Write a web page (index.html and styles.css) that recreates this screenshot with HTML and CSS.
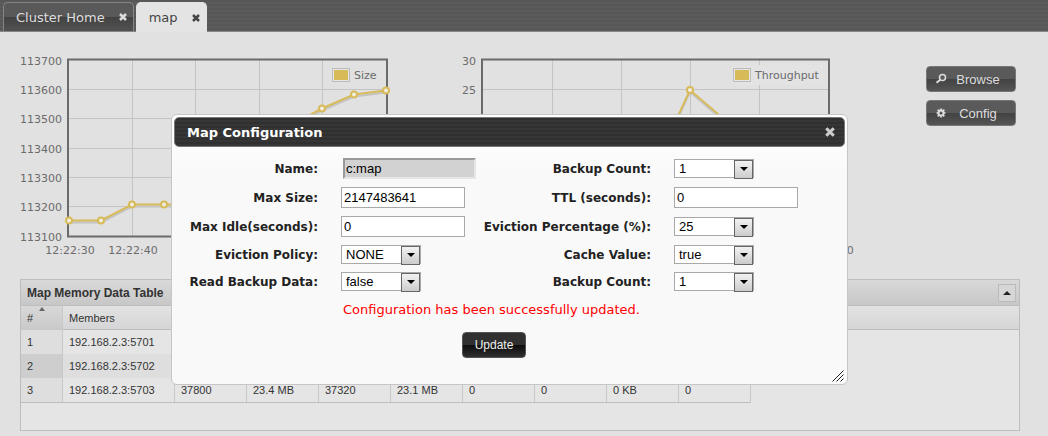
FILE: index.html
```html
<!DOCTYPE html>
<html lang="en">
<head>
<meta charset="utf-8">
<title>Cluster map</title>
<link rel="stylesheet" href="styles.css">
</head>
<body>
<svg width="0" height="0" class="defs" aria-hidden="true">
  <symbol id="close" viewBox="0 0 8 8"><path d="M1 1 7 7M7 1 1 7" fill="none" stroke="currentColor" stroke-width="2.5"/></symbol>
</svg>
<nav class="tabs">
  <div class="tab"><a href="#home">Cluster Home</a><button class="close" aria-label="Close Cluster Home"><svg width="8" height="8"><use href="#close"/></svg></button></div>
  <div class="tab tab-active"><a href="#map">map</a><button class="close" aria-label="Close map"><svg width="8" height="8"><use href="#close"/></svg></button></div>
</nav>
<main>
  <section class="overview">
    <svg class="chart" width="400" height="212" viewBox="14 50 400 212">
      <path class="grid" d="M132.5 60V236M195.5 60V236M259.5 60V236M322.5 60V236M69 89.500H386M69 118.500H386M69 148.500H386M69 177.500H386M69 206.500H386"/>
      <rect class="frame" x="68" y="59.500" width="319" height="177"/>
      <g class="ticks" text-anchor="end">
        <text x="62" y="65">113700</text><text x="62" y="94">113600</text><text x="62" y="123">113500</text>
        <text x="62" y="153">113400</text><text x="62" y="182">113300</text><text x="62" y="211">113200</text><text x="62" y="241">113100</text>
      </g>
      <g class="ticks" text-anchor="middle"><text x="70" y="254">12:22:30</text><text x="133" y="254">12:22:40</text></g>
      <path class="shade" d="M69 222.500H101L132 206.500H164L196 206.500L227 176L259 154L291 128L322 110.500L354 96.500L386 92.500"/>
      <path class="line" d="M69 220.500H101L132 204.500H164L196 204.500L227 174L259 152L291 125L322 108.500L354 94.500L386 90.500"/>
      <g class="dots"><circle cx="69" cy="220.500" r="3"/><circle cx="101" cy="220.500" r="3"/><circle cx="132" cy="204.500" r="3"/><circle cx="164" cy="204.500" r="3"/><circle cx="322" cy="108.500" r="3"/><circle cx="354" cy="94.500" r="3"/><circle cx="386" cy="90.500" r="3"/></g>
      <rect class="swatch-box" x="332.500" y="68.500" width="17" height="13"/><rect class="swatch" x="334" y="70" width="14" height="10"/>
      <text class="ticks" x="354" y="79">Size</text>
    </svg>
    <svg class="chart" width="410" height="212" viewBox="450 50 410 212">
      <path class="grid" d="M552.500 60V236M621.500 60V236M690.500 60V236M759.500 60V236M483 89.500H828M483 118.500H828M483 148.500H828M483 177.500H828M483 206.500H828"/>
      <rect class="frame" x="482" y="59.500" width="347" height="177"/>
      <g class="ticks" text-anchor="end"><text x="476" y="65">30</text><text x="476" y="94">25</text></g>
      <text class="ticks" x="829" y="254" text-anchor="middle">12:23:20</text>
      <path class="shade" d="M655 168L690 92L725 122"/>
      <path class="line" d="M655 166L690 90L725 120"/>
      <g class="dots"><circle cx="690" cy="90" r="3"/></g>
      <rect class="legend-back" x="732" y="65" width="91" height="20"/>
      <rect class="swatch-box" x="733.500" y="68.500" width="17" height="13"/><rect class="swatch" x="735" y="70" width="14" height="10"/>
      <text class="ticks" x="755" y="79">Throughput</text>
    </svg>
    <div class="actions">
      <button class="action"><svg width="12" height="12" viewBox="0 0 12 12"><circle cx="7.500" cy="4.500" r="3" fill="none" stroke="currentColor" stroke-width="1.500"/><path d="M5.300 6.700 1.500 9.800" stroke="currentColor" stroke-width="2"/></svg><span>Browse</span></button>
      <button class="action"><svg width="12" height="12" viewBox="0 0 12 12"><circle cx="6" cy="6" r="2.500" fill="none" stroke="currentColor" stroke-width="2"/><path d="M6 1.500V3M6 9V10.500M1.500 6H3M9 6H10.500M2.700 2.700 3.800 3.800M8.200 8.200 9.300 9.300M9.300 2.700 8.200 3.800M3.800 8.200 2.700 9.300" stroke="currentColor" stroke-width="1.700"/></svg><span>Config</span></button>
    </div>
  </section>
  <section class="panel">
    <header class="panel-head"><h2>Map Memory Data Table</h2><button class="collapse" aria-label="Collapse"><svg width="8" height="4" viewBox="0 0 8 4"><path d="M0 4 4 0 8 4Z" fill="currentColor"/></svg></button></header>
    <div class="table-area">
      <table>
        <thead><tr><th class="sorted">#<svg class="sort" width="6" height="4" viewBox="0 0 6 4"><path d="M0 4 3 0 6 4Z" fill="currentColor"/></svg></th><th class="members">Members</th><th></th><th></th><th></th><th></th><th></th><th></th><th></th><th></th></tr></thead>
        <tbody>
          <tr><td>1</td><td>192.168.2.3:5701</td><td></td><td></td><td></td><td></td><td></td><td></td><td></td><td></td></tr>
          <tr><td>2</td><td>192.168.2.3:5702</td><td></td><td></td><td></td><td></td><td></td><td></td><td></td><td></td></tr>
          <tr><td>3</td><td>192.168.2.3:5703</td><td>37800</td><td>23.4 MB</td><td>37320</td><td>23.1 MB</td><td>0</td><td>0</td><td>0 KB</td><td>0</td></tr>
        </tbody>
      </table>
    </div>
  </section>
</main>
<section class="dialog" role="dialog" aria-labelledby="dialog-title">
  <header class="dialog-head"><h1 id="dialog-title">Map Configuration</h1><button class="close" aria-label="Close dialog"><svg width="10" height="10"><use href="#close"/></svg></button></header>
  <form>
    <div class="fields">
      <label for="name">Name:</label><div class="control"><input class="text locked" id="name" value="c:map" readonly></div>
      <label for="backup">Backup Count:</label><div class="control"><span class="pick"><select id="backup"><option>1</option></select></span></div>
      <label for="max">Max Size:</label><div class="control"><input class="text" id="max" value="2147483641"></div>
      <label for="ttl">TTL (seconds):</label><div class="control"><input class="text" id="ttl" value="0"></div>
      <label for="idle">Max Idle(seconds):</label><div class="control"><input class="text" id="idle" value="0"></div>
      <label for="percent">Eviction Percentage (%):</label><div class="control"><span class="pick"><select id="percent"><option>25</option></select></span></div>
      <label for="policy">Eviction Policy:</label><div class="control"><span class="pick"><select id="policy"><option>NONE</option></select></span></div>
      <label for="cache">Cache Value:</label><div class="control"><span class="pick"><select id="cache"><option>true</option></select></span></div>
      <label for="read">Read Backup Data:</label><div class="control"><span class="pick"><select id="read"><option>false</option></select></span></div>
      <label for="backup2">Backup Count:</label><div class="control"><span class="pick"><select id="backup2"><option>1</option></select></span></div>
    </div>
    <p class="message">Configuration has been successfully updated.</p>
    <button class="update" type="button">Update</button>
  </form>
  <svg class="grip" width="12" height="12" viewBox="0 0 12 12"><path d="M0.500 11.500 11.500 0.500M4.500 11.500 11.500 4.500M8.500 11.500 11.500 8.500" stroke="#222" fill="none"/></svg>
</section>
</body>
</html>
```
FILE: styles.css
```css
* { box-sizing: border-box; }
body { margin: 0; background: #e1e1e1; color: #333; font-family: "DejaVu Sans", Verdana, sans-serif; font-size: 13px; overflow: hidden; }
button { font-family: "Liberation Sans", Arial, sans-serif; padding: 0; border: 0; cursor: pointer; }
h1, h2, p { margin: 0; }
.defs { position: absolute; }

.tabs { display: flex; align-items: flex-end; gap: 2px; height: 32px; padding: 0 3px; border-bottom: 1px solid #858585; background: repeating-linear-gradient(#575757 0 2px, #5c5c5c 2px 4px); }
.tab { display: flex; align-items: center; gap: 14px; height: 29px; padding: 0 6px 0 12px; border: 1px solid #858585; border-bottom: 0; border-radius: 5px 5px 0 0; background: linear-gradient(#595959 0 50%, #424242 50%, #525252); color: #ddd; }
.tab a { color: inherit; text-decoration: none; }
.tab-active { margin-bottom: -1px; height: 30px; background: #e4e4e4; border-color: #e4e4e4; color: #444; }
.close { display: flex; background: none; color: inherit; }

.overview { display: flex; gap: 36px; padding: 18px 32px 0 14px; }
.chart { flex: none; display: block; }
.grid { stroke: #c4c4c4; fill: none; }
.frame { fill: none; stroke: #6b6b6b; stroke-width: 2; }
.ticks { font-size: 11px; fill: #6b6b6b; }
.line { fill: none; stroke: #d8bb59; stroke-width: 2; }
.shade { fill: none; stroke: #c4c4c4; stroke-width: 2; }
.dots { fill: #f0ede4; stroke: #d8bb59; stroke-width: 2; }
.swatch { fill: #d8bb59; }
.swatch-box { fill: #e6e6e6; stroke: #bbb; }
.legend-back { fill: #e3e3e3; }
.actions { display: flex; flex-direction: column; gap: 8px; margin-left: auto; padding-top: 16px; }
.action { display: flex; align-items: center; width: 90px; height: 26px; padding-left: 8px; border: 1px solid #777; border-radius: 4px; background: linear-gradient(#5a5a5a 0 50%, #424242 50%, #555); color: #ddd; font-size: 13px; }
.action span { flex: 1; padding-right: 6px; }

.panel { margin: 17px 28px 0 20px; border: 1px solid #bdbdbd; background: #e5e5e5; font: 11px "Liberation Sans", Arial, sans-serif; }
.panel-head { display: flex; align-items: center; justify-content: space-between; height: 26px; padding: 0 3px 0 6px; background: linear-gradient(#d9d9d9, #c7c7c7); border-bottom: 1px solid #bdbdbd; }
.panel-head h2 { font-size: 12px; }
.collapse { display: flex; align-items: center; justify-content: center; width: 18px; height: 18px; border: 1px solid #bbb; background: #d6d6d6; color: #222; }
.table-area { position: relative; padding-bottom: 27px; background: linear-gradient(#e2e2e2, #d5d5d7) no-repeat 0 0 / 100% 24px; }
.table-area::before { content: ""; position: absolute; left: 0; right: 0; top: 23px; border-top: 1px solid #bdbdbd; }
table { table-layout: fixed; width: 730px; border-collapse: separate; border-spacing: 0; border-bottom: 1px solid #bdbdbd; }
th, td { height: 24px; padding: 0 6px; text-align: left; font-weight: normal; border-right: 1px solid #c8c8c8; overflow: hidden; white-space: nowrap; }
.sorted { position: relative; width: 42px; background: linear-gradient(#d8d8d8, #c9c9c9); }
.members { width: 112px; }
.sort { position: absolute; left: 18px; top: 1px; color: #666; }
td:first-child { background: #dedede; }
tr:nth-child(even) td { background: #dedede; }
tr:nth-child(even) td:first-child { background: #cecece; }

.dialog { position: absolute; left: 171px; top: 114px; width: 677px; padding: 2px 2px 26px; border: 1px solid #c6c6c6; border-radius: 6px; background: linear-gradient(#fff, #f9f9f9 60px); color: #222; }
.dialog-head { display: flex; align-items: center; justify-content: space-between; height: 30px; padding: 0 9px 0 12px; border: 1px solid #777; border-radius: 5px; background: repeating-linear-gradient(#303030 0 2px, #363636 2px 4px); color: #fff; }
.dialog-head h1 { font-size: 13px; }
.dialog-head .close { color: #ccc; }
.fields { display: grid; grid-template-columns: 144px 158px 175px 1fr; row-gap: 8px; align-items: center; padding-top: 11px; }
.fields label { font-size: 12px; font-weight: bold; text-align: right; white-space: nowrap; }
.control { display: flex; padding-left: 23px; }
.text, select { font: 13px "Liberation Sans", Arial, sans-serif; color: #000; background: #fff; border: 1px solid #a9a9a9; border-radius: 0; }
.text { width: 124px; height: 21px; padding: 0 2px; }
.locked { width: 133px; margin-left: 2px; background: #d2d2d2; border: 2px solid; border-color: #999 #e6e6e6 #e6e6e6 #999; padding: 0 1px; }
.pick { position: relative; }
select { appearance: none; display: block; width: 80px; height: 19px; padding: 0 18px 0 4px; }
.pick::before { content: ""; position: absolute; right: 1px; top: 1px; width: 17px; height: 17px; border: 1px solid #666; background: linear-gradient(#f2f2f2, #ccc); pointer-events: none; }
.pick::after { content: ""; position: absolute; right: 6px; top: 8px; border: 4px solid transparent; border-top-color: #000; border-bottom: 0; pointer-events: none; }
.message { padding: 11px 0 0 169px; line-height: 16px; color: #f00; }
.update { display: block; width: 64px; height: 26px; margin: 14px 0 0 288px; border: 1px solid #555; border-radius: 4px; background: linear-gradient(#303030 0 50%, #0c0c0c 50%, #303030); color: #eee; font-size: 12px; }
.grip { position: absolute; right: 3px; bottom: 2px; }
```
